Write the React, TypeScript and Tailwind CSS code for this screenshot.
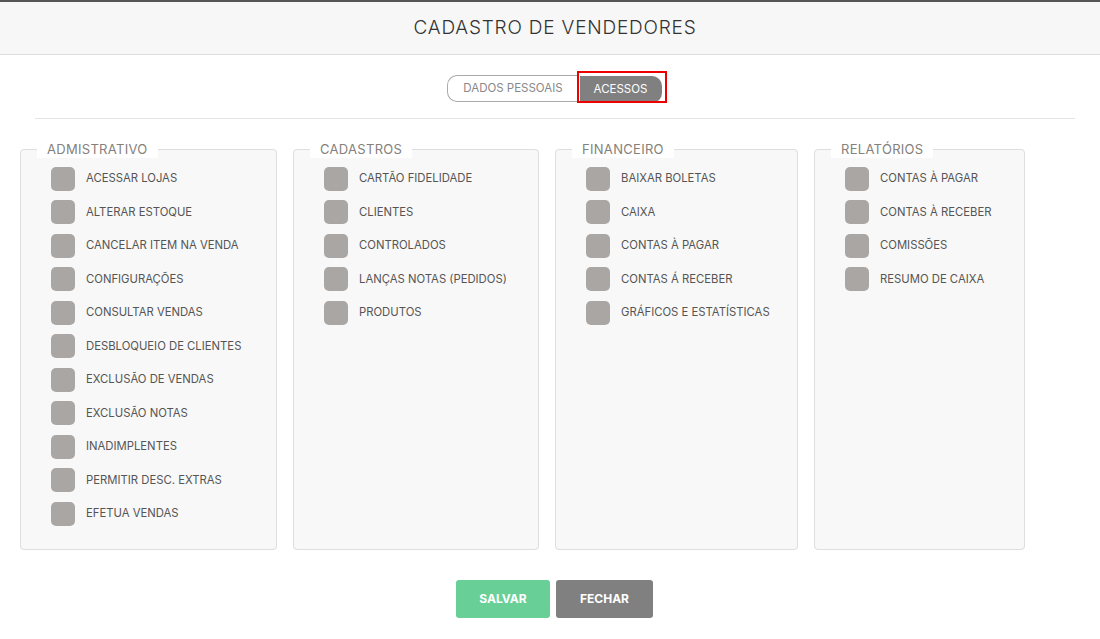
import { useState } from 'react';

const groups = [
  {
    title: 'ADMISTRATIVO',
    width: 'w-[257px]',
    items: [
      'ACESSAR LOJAS',
      'ALTERAR ESTOQUE',
      'CANCELAR ITEM NA VENDA',
      'CONFIGURAÇÕES',
      'CONSULTAR VENDAS',
      'DESBLOQUEIO DE CLIENTES',
      'EXCLUSÃO DE VENDAS',
      'EXCLUSÃO NOTAS',
      'INADIMPLENTES',
      'PERMITIR DESC. EXTRAS',
      'EFETUA VENDAS',
    ],
  },
  {
    title: 'CADASTROS',
    width: 'w-[246px]',
    items: ['CARTÃO FIDELIDADE', 'CLIENTES', 'CONTROLADOS', 'LANÇAS NOTAS (PEDIDOS)', 'PRODUTOS'],
  },
  {
    title: 'FINANCEIRO',
    width: 'w-[243px]',
    items: ['BAIXAR BOLETAS', 'CAIXA', 'CONTAS À PAGAR', 'CONTAS Á RECEBER', 'GRÁFICOS E ESTATÍSTICAS'],
  },
  {
    title: 'RELATÓRIOS',
    width: 'w-[211px]',
    items: ['CONTAS À PAGAR', 'CONTAS À RECEBER', 'COMISSÕES', 'RESUMO DE CAIXA'],
  },
];

function AccessItem({ label }: { label: string }) {
  const [checked, setChecked] = useState(false);
  return (
    <label className="flex items-center h-[33.5px] cursor-pointer" onClick={() => setChecked(!checked)}>
      <span className={`w-6 h-6 rounded-[5px] shrink-0 ${checked ? 'bg-[#68cf96]' : 'bg-[#aaa6a3]'}`} />
      <span className="ml-[11px] text-[11.3px] text-[#555] whitespace-nowrap">{label}</span>
    </label>
  );
}

export default function App() {
  const [tab, setTab] = useState<'dados' | 'acessos'>('acessos');

  return (
    <div className="min-h-[639px] bg-white font-['Inter',sans-serif] border-t-2 border-[#555]">
      <div className="h-[53px] bg-[#f7f7f7] border-b border-[#dcdcdc] flex items-center justify-center">
        <h1 className="text-[19px] font-light text-[#333] tracking-[0.8px] pl-[10px]">CADASTRO DE VENDEDORES</h1>
      </div>

      <div className="flex justify-center pt-[20px] pl-[8px]">
        <div className="flex h-[27px]">
          <button
            onClick={() => setTab('dados')}
            className="w-[132px] border border-r-0 border-[#aaa] rounded-l-[10px] bg-white text-[11.5px] text-[#888]"
          >
            DADOS PESSOAIS
          </button>
          <div className="relative ml-[1px]">
            <button
              onClick={() => setTab('acessos')}
              className="h-[27px] w-[82px] rounded-r-[10px] bg-[#808080] text-[11.5px] text-white"
            >
              ACESSOS
            </button>
            <span className="absolute -left-[3px] -top-[4px] -right-[5px] -bottom-[1px] border-2 border-[#e00] pointer-events-none" />
          </div>
        </div>
      </div>

      <div className="ml-[35px] mr-[25px] mt-[16px] border-t border-[#e3e3e3]" />

      {tab === 'acessos' && (
        <div className="flex gap-4 pl-5 mt-[21px]">
          {groups.map((g) => (
            <fieldset
              key={g.title}
              className={`${g.width} bg-[#f8f8f8] border border-[#dedede] rounded-[4px] pl-[30px] pb-[18px]`}
            >
              <legend className="ml-[-14px] px-[10px] bg-white text-[13px] text-[#85807b] h-[18px] leading-[18px] tracking-[0.3px]">
                {g.title}
              </legend>
              <div className="pt-[4px]">
                {g.items.map((it) => (
                  <AccessItem key={it} label={it} />
                ))}
              </div>
            </fieldset>
          ))}
        </div>
      )}

      <div className="flex justify-center gap-[6px] mt-[30px] pl-[9px]">
        <button className="w-[94px] h-[38px] rounded-[3px] bg-[#68cf96] text-white text-[12px] font-bold">SALVAR</button>
        <button className="w-[97px] h-[38px] rounded-[3px] bg-[#808080] text-white text-[12px] font-bold">FECHAR</button>
      </div>
    </div>
  );
}
